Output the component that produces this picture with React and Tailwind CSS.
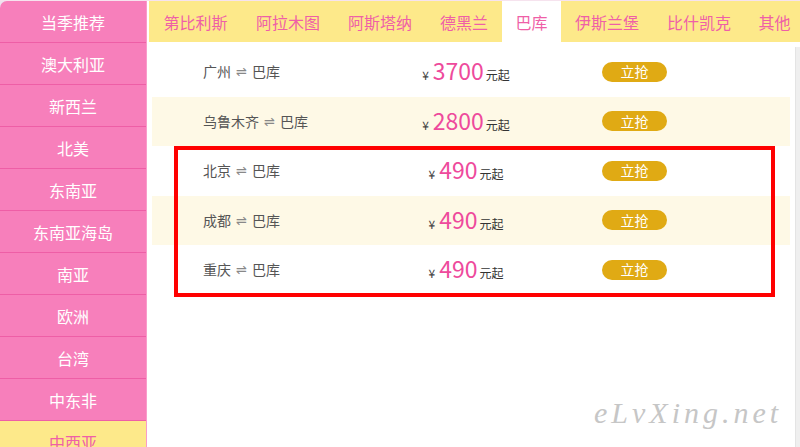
import React from "react";

const sideItems = ["当季推荐", "澳大利亚", "新西兰", "北美", "东南亚", "东南亚海岛", "南亚", "欧洲", "台湾", "中东非"];

const tabs = [
  { t: "第比利斯", w: "w-[93px]" },
  { t: "阿拉木图", w: "w-[92px]" },
  { t: "阿斯塔纳", w: "w-[92px]" },
  { t: "德黑兰", w: "w-[76px]" },
  { t: "巴库", w: "w-[59px]", active: true },
  { t: "伊斯兰堡", w: "w-[92px]" },
  { t: "比什凯克", w: "w-[92px]" },
  { t: "其他", w: "w-[59px]" },
];

const rows = [
  { from: "广州", price: "3700" },
  { from: "乌鲁木齐", price: "2800" },
  { from: "北京", price: "490" },
  { from: "成都", price: "490" },
  { from: "重庆", price: "490" },
];

export default function App() {
  return (
    <div
      className="relative w-[800px] h-[447px] overflow-hidden bg-white"
      style={{ fontFamily: '"Noto Sans CJK SC", "Noto Sans", sans-serif' }}
    >
      <div className="h-px bg-[#f6e3ee]" />
      <div className="flex">
        <div className="w-[147px] shrink-0 bg-[#efe3ef]">
          <div className="rounded-tl-[7px] overflow-hidden bg-[#f77fbb] border-r border-[#f99cca]">
            {sideItems.map((s) => (
              <div
                key={s}
                className="h-[42px] border-b border-[#ee5ea6] flex items-center justify-center text-white text-[16px]"
              >
                {s}
              </div>
            ))}
            <div className="h-[42px] bg-[#fde98a] flex items-center justify-center text-[#ef5fa7] text-[16px]">
              中西亚
            </div>
          </div>
        </div>
        <div className="w-[2px] shrink-0 bg-white" />
        <div className="flex-1 min-w-0 overflow-hidden flex flex-col">
          <div className="h-[41px] bg-[#fde98a] flex">
            {tabs.map((tab) => (
              <div
                key={tab.t}
                className={`${tab.w} shrink-0 h-full flex items-center justify-center text-[16px] text-[#ef5fa7] ${tab.active ? "bg-white" : ""}`}
              >
                {tab.t}
              </div>
            ))}
          </div>
          <div className="flex pt-[5px]">
            <div className="ml-[3px] w-[638px] shrink-0 flex flex-col">
              {rows.map((r, i) => (
                <div
                  key={i}
                  className={`h-[49.5px] flex items-center pl-[51px] ${i % 2 === 1 ? "bg-[#fef9e6]" : "bg-white"}`}
                >
                  <div className="w-[190px] text-[14px] text-[#555555] flex items-center">
                    <span>{r.from}</span>
                    <span className="mx-[5px] text-[13px] text-[#888888]" style={{ fontFamily: '"DejaVu Sans", sans-serif' }}>⇌</span>
                    <span>巴库</span>
                  </div>
                  <div className="w-[146px] flex items-baseline justify-center">
                    <span className="text-[12px] text-[#444444] mr-[4px]">¥</span>
                    <span className="text-[23px] leading-none text-[#ee4a9c]">{r.price}</span>
                    <span className="text-[12px] text-[#333333] ml-[2px]">元起</span>
                  </div>
                  <div className="ml-[63px] w-[65px] h-[20px] rounded-full bg-[#e0aa14] flex items-center justify-center text-white text-[14px]">
                    立抢
                  </div>
                </div>
              ))}
            </div>
            <div className="ml-[5px] w-[5px] shrink-0 h-[400px] bg-[#efefef] border-l border-[#e4e4e4]" />
          </div>
        </div>
      </div>

      <div className="absolute left-[174px] top-[146px] w-[601px] h-[151px] border-[4px] border-[#ff0000]" />

      <div
        className="absolute left-[594px] top-[390px] text-[30px] italic tracking-[4px] text-[#c6c6c6]"
        style={{ fontFamily: '"Liberation Serif", serif' }}
      >
        eLvXing.net
      </div>
    </div>
  );
}
